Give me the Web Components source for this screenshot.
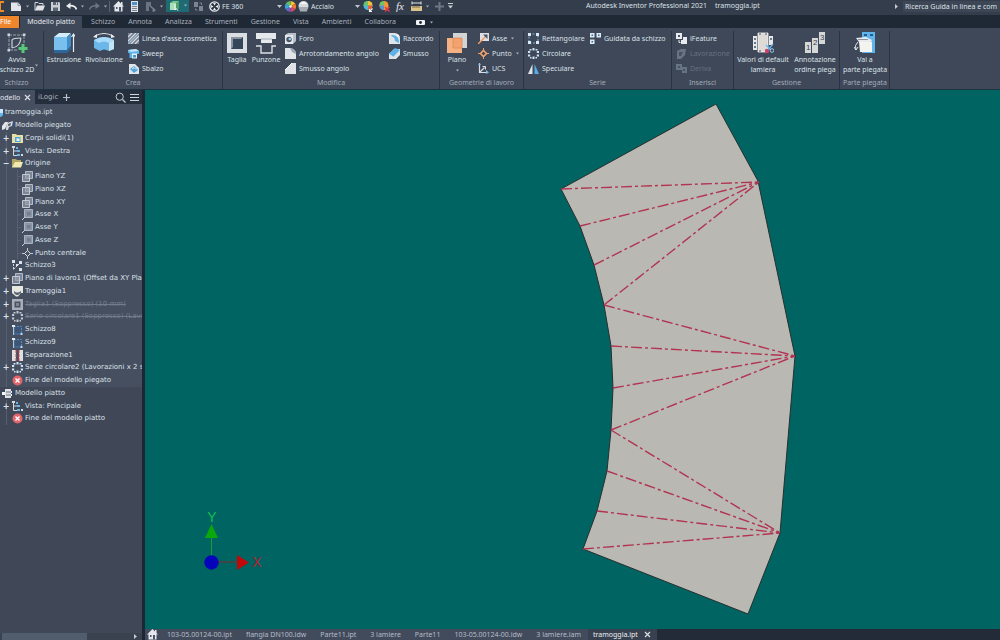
<!DOCTYPE html>
<html lang="it">
<head>
<meta charset="utf-8">
<meta name="viewport" content="width=device-width, initial-scale=1">
<title>Autodesk Inventor Professional 2021 - tramoggia.ipt</title>
<style>
  html, body { margin: 0; height: 100%; }
  body { background: #1f2835; font: 7px/9px "Noto Sans", "Open Sans", sans-serif; color: #dce1e8; }
</style>
</head>
<body>
<inventor-app></inventor-app>

<script>
/* Small glyphs are drawn on an 11-unit grid, large ones on a 22-unit grid. */
const RING = c => `<g fill="${c}"><path d="M4.500 0h2v2.500h-2zM4.500 8.500h2V11h-2zM0 3h2.200v2H0zM8.800 3H11v2H8.800zM0 6.500h2.200v2H0zM8.800 6.500H11v2H8.800z"/><path d="M1.500 1h2v1.500h-2zM7.500 1h2v1.500h-2zM2 9h1.500v1.500H2zM7.500 9H9v1.500H7.500z"/></g>`;
const SMALL = {
  logo: '<path d="M-5 1H4M-5 10H4M0 1v9" stroke="#f08a24" stroke-width="2" fill="none"/>',
  newdoc: '<path d="M0 1.500h7l3 3v5.500H0z" fill="#e2e5e9"/><path d="M7 1.500v3h3" fill="none" stroke="#8a92a0"/>',
  open: '<path d="M1 9.500V1.500h3l1 1h4v2" fill="none" stroke="#d4d8de"/><path d="M1 9.500l2-5h8l-2 5z" fill="#dfe2e7"/>',
  save: '<path d="M1 1h8l1 1v8H1z" fill="#c9ced6"/><path d="M3 1h5v3H3zM3 6.500h5V10H3z" fill="#5b6575"/><path d="M6 1.500h1v2H6z" fill="#e8eaee"/>',
  undo: '<path d="M10.500 8.500C9.500 5.500 7.500 4.500 4 4.700" fill="none" stroke="#eceff2" stroke-width="1.800"/><path d="M0 5l4.500-3.500v6.500z" fill="#eceff2"/>',
  redo: '<path d="M.5 8.500C1.500 5.500 3.500 4.500 7 4.700" fill="none" stroke="#6a7484" stroke-width="1.600"/><path d="M11 5L6.500 1.500v6.500z" fill="#6a7484"/>',
  home: '<path d="M5.500 0L11 5.500H9.500V10.500H1.500V5.500H0z" fill="#e4e7eb"/><path d="M3 6h1.500v2H3zM6 6h2v4.500H6z" fill="#4c5667"/><path d="M8 1h1.500v3H8z" fill="#e4e7eb"/>',
  doc: '<path d="M2 0h7v11H2z" fill="#dfe3e8"/><path d="M3 1h5v3H3z" fill="#4d94c9"/><path d="M3 5.500h5M3 7.500h5M3 9.500h5" stroke="#5f6a7a" stroke-width=".8"/>',
  select: '<path d="M1 1h5v4H4v5H1z" fill="#6b7484"/><path d="M5 5l5 4-2 .3 1 1.700" fill="none" stroke="#7d8695" stroke-width="1.300"/>',
  cubes: '<path d="M1 3l3-2h6v7l-3 2H1z" fill="#79c690"/><path d="M1 3h6v7H1z" fill="#a6dfb6"/><path d="M7 3l3-2v7l-3 2z" fill="#4f9f6b"/><path d="M6 4v6l1.500-1.300 1.500 2" fill="none" stroke="#f4f6f8"/>',
  swap: '<path d="M1 1h4v5H1zM6 5h4v5H6z" fill="#7b8493"/><path d="M6.500 2h2v2M4.500 9h-2V7.500" fill="none" stroke="#7b8493"/>',
  wheel: '<circle cx="5.500" cy="5.500" r="4.700" fill="#2b3442" stroke="#e8eaee" stroke-width="1.300"/><g fill="#eceef1"><path d="M4 2h3L5.500 4.500zM4 9h3L5.500 6.500zM2 4v3l2.500-1.500zM9 4v3L6.500 5.500z"/></g>',
  color: '<g stroke="none"><path d="M5.500 5.500V0a5.500 5.500 0 0 1 4.800 2.800z" fill="#f5c22f"/><path d="M5.500 5.500l4.800-2.700a5.500 5.500 0 0 1 0 5.400z" fill="#ef7b32"/><path d="M5.500 5.500l4.800 2.700A5.500 5.500 0 0 1 5.500 11z" fill="#d8476b"/><path d="M5.500 5.500V11A5.500 5.500 0 0 1 .7 8.200z" fill="#6c62c7"/><path d="M5.500 5.500L.7 8.200a5.500 5.500 0 0 1 0-5.400z" fill="#35a8da"/><path d="M5.500 5.500L.7 2.800A5.500 5.500 0 0 1 5.500 0z" fill="#5fc264"/></g><circle cx="5.500" cy="5.500" r="1.300" fill="#f3efe6"/>',
  colorpick: '<circle cx="5" cy="4.500" r="4.500" fill="#4fb6dd"/><path d="M5 4.500V0a4.500 4.500 0 0 1 4.500 4.500z" fill="#f5c22f"/><path d="M5 4.500h4.500A4.500 4.500 0 0 1 5 9z" fill="#e8603c"/><path d="M5 4.500H.5A4.500 4.500 0 0 1 5 0z" fill="#69c565"/><path d="M6.500 10.500l3-3M6.500 8v2.500H9" stroke="#f1f3f5" stroke-width="1.200" fill="none"/>',
  colorclear: '<circle cx="5" cy="4.500" r="4.500" fill="#ef9a38"/><path d="M5 4.500V0a4.500 4.500 0 0 0-4.500 4.500z" fill="#69c565"/><path d="M5 4.500H.5A4.500 4.500 0 0 0 5 9z" fill="#5a8fd8"/><path d="M6 6l4.500 4.500M10.500 6L6 10.500" stroke="#e0394b" stroke-width="1.500"/>',
  steel: '<circle cx="5.500" cy="5" r="5" fill="#d7dade"/><path d="M1 6h9l-1 4.500H2z" fill="#a5abb4"/><path d="M2 3a4 4 0 0 1 7 0z" fill="#f5f6f7"/>',
  measure: '<path d="M1 2h9M1 .5v3M10 .5v3" stroke="#e4e7eb"/><path d="M0 5h11v5H0z" fill="#dcc488"/><path d="M2 5v2M4 5v2M6 5v2M8 5v2" stroke="#4b4332" stroke-width=".7"/>',
  plusdim: '<path d="M5.500 1v9M1 5.500h9" stroke="#6d7787" stroke-width="2"/>',
  menu: '<path d="M0 2.500h5" stroke="#c9ced6"/><path d="M0 4.500h5L2.500 7.500z" fill="#c9ced6"/>',
  caret: '<path d="M0 4h5L2.500 7z" fill="#c2c8d1"/>',
  dot: '<path d="M1 4.500h3L2.500 6.500z" fill="#aab1bd"/>',
  right: '<path d="M1 3l3 2.500L1 8z" fill="#c2c8d1"/>',
  camera: '<rect x="1" y="3" width="9" height="5" rx="1" fill="#f2f4f6"/><circle cx="5.500" cy="5.500" r="1.400" fill="#1f2835"/>',
  axisline: '<path d="M0 0h11v11H0z" fill="#75808f"/><path d="M0 4l4-4M0 8l8-8M0 11L11 0M3 11l8-8M7 11l4-4" stroke="#dbe0e6" stroke-width="1.100"/><path d="M0 11L11 0" stroke="#7cc0ea" stroke-width=".8"/>',
  sweep: '<path d="M0 2l8-1 3 2v3H6v4H1.500V5H0z" fill="#5fb2e6"/><path d="M0 2l8-1 3 2-8 1z" fill="#c3e4f7"/><path d="M4 5.500h5v5H4z" fill="#dff0fa"/><path d="M5 7h3v2.500H5z" fill="#4d94c9"/>',
  emboss: '<path d="M1 1h6l4 4v6H1z" fill="#e1e5ea"/><path d="M2 6l4-3 4 4-4 3z" fill="#4fa3dc"/><path d="M4 6l2-1.500 2 2" fill="none" stroke="#e7f4fc"/>',
  hole: '<path d="M0 2h8v9H0z" fill="#e4e7eb"/><path d="M0 2l3-2h8v8l-3 3V2z" fill="#b9c0c9"/><circle cx="4" cy="6.500" r="2.700" fill="#4a5465"/><circle cx="4.800" cy="6" r="1.300" fill="#9ed1ef"/>',
  roundcorner: '<path d="M0 0h5q6 1 6 6v5H0z" fill="#e0e4e8"/><path d="M5 0q6 1 6 6L7 4z" fill="#9aa4b2"/>',
  chamfercorner: '<path d="M0 11V7l7-7h4v11z" fill="#dfe3e7"/><path d="M0 7l7-7" stroke="#fafbfb"/>',
  fillet: '<path d="M0 0h6l5 5v6H0z" fill="#dfe3e7"/><path d="M3 2q7 0 7 8l-4-2Q6 4 2 3z" fill="#5cb1e6"/><path d="M6 0q5 1 5 5L8 3z" fill="#f7f8f9"/>',
  chamfer: '<path d="M0 6l5-5h6v6l-4 4H0z" fill="#dfe3e7"/><path d="M0 6l6-6 5 2-7 7z" fill="#5cb1e6"/><path d="M0 6l4 3" stroke="#c6e6f8"/>',
  axis: '<path d="M2 0h9v8H2z" fill="#dde1e6"/><path d="M0 11L8 3" stroke="#f09b62" stroke-width="1.500"/><path d="M5 1.500h4.500V6z" fill="#4a5465"/>',
  point: '<path d="M5.500 0v11M0 5.500h11" stroke="#e99b68"/><path d="M5.500 2.500l3 3-3 3-3-3z" fill="#3c4656" stroke="#f4a36c" stroke-width="1.600"/>',
  ucs: '<path d="M1.500 0v9.500H10M1.500 9.500l5-5" fill="none" stroke="#d9dde3" stroke-width="1.200"/><path d="M8 7l3 2.500-3 1.500zM0 2l1.500-2L3 2z" fill="#7cc0ea"/><path d="M4.500 3.500h3v3" fill="none" stroke="#d9dde3"/>',
  rect: '<path d="M1 1h9v9H1z" fill="none" stroke="#7fb5dc" stroke-dasharray="2 1.500"/><path d="M0 0h3v3H0zM8 0h3v3H8zM0 8h3v3H0zM8 8h3v3H8z" fill="#dceaf5"/>',
  circ: RING('#cfe6f6'),
  mirror: '<path d="M4.500 1v10H0z" fill="#dfe4ea"/><path d="M6.500 1v10H11z" fill="#54aee8"/>',
  sketchdriven: '<path d="M0 0h4.500v4.500H0zM6.500 0H11v4.500H6.500zM0 6.500h4.500V11H0z" fill="#dceaf5"/><path d="M1.500 1.500H3V3H1.500zM8 1.500h1.500V3H8zM1.500 8H3v1.500H1.500z" fill="#2f6f9f"/>',
  ifeature: '<path d="M0 0h6v6H0z" fill="#e9ecef"/><path d="M5 10V7h2V4h4v7H5z" fill="#e9ecef"/><path d="M2 2h2v2H2z" fill="#4a5465"/><path d="M3 7v2.500h1.500" fill="none" stroke="#e9ecef"/>',
  machine: '<path d="M1 3l4-2h5l-1 6-4 4H1z" fill="#687383"/><path d="M3 4h4l-2 4H3z" fill="#475163"/>',
  derive: '<path d="M0 1h6v3h5v6H6V7H0z" fill="#687383"/><path d="M2 3h2v2H2zM7 6h2v2H7z" fill="#475163"/>',
  search: '<circle cx="4.700" cy="4.700" r="3.600" fill="none" stroke="#c3c9d2"/><path d="M7.500 7.500l3 3" stroke="#c3c9d2" stroke-width="1.200"/>',
  burger: '<path d="M1 2.500h9M1 5.500h9M1 8.500h9" stroke="#d0d5dd" stroke-width="1.200"/>',
  add: '<path d="M5.500 2v7M2 5.500h7" stroke="#b9c0cb" stroke-width="1.200"/>',
  close: '<path d="M3 3l5 5M8 3L3 8" stroke="#d8dce3" stroke-width="1.200"/>',
  part: '<path d="M0 2h9l2 1v5q-1 2-3 2H0z" fill="#63b6ea"/><path d="M8 2h3v4H8z" fill="#cde8f8"/>',
  folded: '<path d="M0 6l3-4h3L3 9l-3 1z" fill="#e4e7eb"/><path d="M4 8l1-5 6-2-1 5-3 1-1 3H4z" fill="#d3d7de"/><path d="M6 4l3-1-.5 2.500L6 6z" fill="#5a6474"/>',
  flat: '<path d="M3 1h6v9H3z" fill="#dfe3e8"/><path d="M0 4h3v3H0zM9 3h1v2H9zM9 6h1v2H9z" fill="#f4f5f7"/><path d="M4 4h5M4 7h5" stroke="#4a5465" stroke-width=".8"/>',
  solids: '<path d="M0 1h4l1 1h6v8H0z" fill="#e8dfa4"/><path d="M3 4h5.500v5H3z" fill="#4fa6dd"/><path d="M4.500 5.500h3V8h-3z" fill="#f2f4f0"/>',
  view: '<path d="M1.500 1v8.500H5M1.500 5H5" fill="none" stroke="#d3d9e0"/><path d="M4 1h2v2H4zM5 8h3v2H5zM5 4h3v2H5z" fill="#6ab5e8"/><path d="M9 8h2v2H9zM0 0h3v2H0z" fill="#d3d9e0"/>',
  folder: '<path d="M0 9.500V1h4l1 1h4v2" fill="#b3a564"/><path d="M0 9.500L3 4h8L9 9.500z" fill="#f1e8b0"/>',
  plane: '<path d="M3.500.5h7v7h-7z" fill="#7d8797" stroke="#b4bbc6"/><path d="M.5 3.500h7v7h-7z" fill="#949dab" fill-opacity=".7" stroke="#c3c9d2"/>',
  treeaxis: '<path d="M2.500.5h8v8h-8z" fill="#8a94a3" stroke="#aab2bd"/><path d="M0 11l3-3" stroke="#c9cfd7"/><path d="M5 3h3.500v3.500H5z" fill="#737d8d"/>',
  center: '<path d="M5.500 0v11M0 5.500h11" stroke="#c5cbd4"/><path d="M5.500 2.500l3 3-3 3-3-3z" fill="#4a5465" stroke="#d9dde3"/>',
  sketchused: '<path d="M1.500 1v9M1.500 9.500l7-7M7 9.500h3" fill="none" stroke="#cfd5dd" stroke-dasharray="2 1"/><path d="M0 0h3v3H0zM7 1h3v3H7zM7 8h3v3H7zM4 4h2v2H4z" fill="#dde2e8"/>',
  hopper: '<path d="M0 0h11v7H9L6 10.500H4L0 7z" fill="#e6e8df"/><path d="M2 5q3 3 7 0v2L6 9H4L2 7z" fill="#5a6474"/>',
  cut: '<path d="M0 0h11v11H0z" fill="#a8afba"/><path d="M2.500 2.500h6v6h-6z" fill="#4a5364"/><path d="M4 4h3v3H4z" fill="#7b8594"/>',
  circgrey: RING('#c3c9d2'),
  sketch: '<path d="M2 2.500h7.500V10H2z" fill="#3f5574" stroke="#4d8fd0" stroke-dasharray="2 1"/><path d="M0 1h3v2H0z" fill="#e9ecef"/><path d="M1.500 3v8" stroke="#d5dae1" stroke-width=".8"/><path d="M8.500 9h2v2h-2z" fill="#b8d9f1"/>',
  split: '<path d="M0 0h4v11H0zM7 0h4v11H7z" fill="#dedfdf"/><path d="M4 0v11M7 0v11" stroke="#d0455b" stroke-dasharray="3 1"/>',
  end: '<circle cx="5.500" cy="5.500" r="5" fill="#e0646a"/><path d="M3.500 3.500l4 4M7.500 3.500l-4 4" stroke="#fff" stroke-width="1.400"/>'
};
const LARGE = {
  sketch2d: '<path d="M3 3h15v9M3 3v15h9" fill="none" stroke="#98a1af" stroke-dasharray="3 1"/><path d="M6 16V8q1-2 9-2" fill="none" stroke="#cdd3da" stroke-width="1.200"/><path d="M6 16q8-1 9-10" fill="none" stroke="#cdd3da" stroke-width="1.200"/><path d="M1.500 1.500h2.500v2.500H1.500zM17 1.500h2.500v2.500H17zM1.500 17h2.500v2.500H1.500z" fill="#cfd4dc"/><path d="M17 12v9M12.500 16.500h9" stroke="#58c878" stroke-width="3"/>',
  extrude: '<path d="M1 5l5-4h12l-4 4z" fill="#d3ecfa"/><path d="M1 5h13v13H1z" fill="#79c0ee"/><path d="M14 5l4-4v13l-4 4z" fill="#3f8fcb"/><path d="M1 18h13l4-4v3l-4 4H1z" fill="#2d6699"/><path d="M20.500 20V3M18.500 5l2-3 2 3" fill="none" stroke="#e9ecef" stroke-width="1.200"/>',
  revolve: '<path d="M1 8Q11 2 21 8v9l-5 2q-5-3-9 0l-6-3z" fill="#6bb7ea"/><path d="M1 8Q11 2 21 8l-5 3q-5-3-10 0z" fill="#a9dafa"/><path d="M16 11l5-3v9l-5 2z" fill="#c5e4f6"/><path d="M2 4q9-5 18 0" fill="none" stroke="#e9ecef" stroke-width="1.200"/><path d="M0 5l4-3v4zM22 5l-4-3v4z" fill="#e9ecef"/>',
  cut: '<path d="M1 1h20v20H1z" fill="#dadde1"/><path d="M5 5h12v12H5z" fill="#35455a"/><path d="M5 5h12l-2 2H7v8l-2 2z" fill="#8993a1"/>',
  punch: '<path d="M1 1h20v6h-4v4H6V7H1z" fill="#e6e9ec"/><path d="M6 7h11" stroke="#a4acb7"/><path d="M1 14h5v7h11v-7h4" fill="none" stroke="#dce0e5" stroke-width="1.400"/>',
  plane: '<path d="M7 1h14v15H7z" fill="#d2d5d6"/><path d="M1 6h15v15H1z" fill="#f6b183"/><path d="M7 6h9v10H7z" fill="#f4a26d" stroke="#d98a57" stroke-width=".8"/>',
  defaults: '<path d="M1 4h4v14H1zM17 4h4v9h-4z" fill="#e6e8ea"/><path d="M6 1h10v19H6z" fill="#dedad6" stroke="#f4f4f4" stroke-width=".8"/><path d="M3 6v2M3 10v2M3 14v2M19 6v2" stroke="#475163" stroke-width="1.500"/><path d="M8 1v2M14 1v2M8 18v2" stroke="#475163"/><path d="M14 13l5 5M21 12l-5 6" stroke="#67b6e9" stroke-width="1.300"/><circle cx="15" cy="19" r="2.200" fill="#c9426b"/><circle cx="20" cy="18.500" r="1.800" fill="none" stroke="#8fcaf0"/>',
  vai: '<path d="M8 0h13v21H8z" fill="#5fb4ec"/><path d="M10 2h3v2h-3zM16 2h3v2h-3z" fill="#245d8d"/><path d="M2 6l10-1 6 3-1 2H5z" fill="#e9ecee"/><path d="M5 10h13v10H6z" fill="#f3f3f0"/><path d="M4 7.500h10" stroke="#8a94a2"/><path d="M4 10q-4 3-2 8M0 15l2 3 2-3" fill="none" stroke="#e9ecef"/>',
  order: '<path d="M1 10h6v11H1zM8 6h6v15H8zM15 0h6v12h-6z" fill="#d6d8d8"/><g font-family="Liberation Sans, sans-serif" font-size="8" fill="#38424f"><text x="2" y="18">1</text><text x="9" y="13">2</text><text x="16" y="8">3</text></g>'
};

/* Shared helper: registers an element whose shadow root is cloned from a template string. */
const base = 'button,input,select,a{font:inherit;color:inherit;background:none;border:0;margin:0;padding:0;text-decoration:none;white-space:nowrap}';
function element(name, html) {
  const tpl = document.createElement('template');
  customElements.define(name, class extends HTMLElement {
    connectedCallback() {
      if (this.shadowRoot) return;
      tpl.innerHTML = `<style>${base}</style>` + (typeof html === 'function' ? html(this) : html);
      this.attachShadow({ mode: 'open' }).append(tpl.content.cloneNode(true));
    }
  });
}

element('inv-icon', el => {
  const n = el.getAttribute('name');
  const large = el.hasAttribute('large');
  const narrow = ['dot', 'caret', 'menu', 'right'].includes(n);
  const w = large ? 22 : narrow ? 5 : 11, h = large ? 22 : 11;
  return `<style>:host{display:block;flex:none}svg{display:block;overflow:hidden}</style>
  <svg width="${w}" height="${h}" viewBox="0 0 ${w} ${h}" aria-hidden="true">${(large ? LARGE : SMALL)[n]}</svg>`;
});

element('tool-cell', el => `<style>
  :host{display:block;flex:none}
  button{display:flex;align-items:center;justify-content:center;width:${el.hasAttribute('menu') ? 7 : 16}px;height:11px}
  </style><button aria-label="${el.getAttribute('label') || 'Altro'}"><inv-icon name="${el.getAttribute('icon') || 'dot'}"></inv-icon></button>`);

element('title-bar', `<style>
  :host{display:grid;grid-template-columns:583px 1fr auto;height:11px;padding-bottom:4px;background:#343d4b;overflow:hidden}
  .tools{display:flex;align-items:center}
  .logo{width:8px;overflow:hidden}
  .sep{width:1px;height:11px;background:#596373}
  .on{display:flex;background:#1f6b73;height:12px;width:23px;box-sizing:border-box;margin:0 1px}
  .pick{display:flex;align-items:center;height:11px}
  .pick select{appearance:none;width:55px;height:11px;line-height:11px}
  .pick.mat{gap:2px}
  .pick.mat select{width:42px}
  .fx{font:italic 11px/11px "Liberation Serif",serif;width:16px;text-align:center;color:#e8ebef}
  .name{display:flex;gap:8px;padding-left:3px;line-height:11px;white-space:nowrap}
  .help{display:flex;align-items:center;gap:4px;width:106px;overflow:hidden}
  .help input{width:97px;height:11px;padding-left:2px;box-sizing:border-box;background:#3d4655}
  .help input::placeholder{color:#dce1e8;opacity:1}
  </style>
  <div class="tools">
    <div class="logo"><inv-icon name="logo"></inv-icon></div>
    <tool-cell icon="newdoc" label="Nuovo"></tool-cell><tool-cell menu></tool-cell>
    <tool-cell icon="open" label="Apri"></tool-cell><tool-cell icon="save" label="Salva"></tool-cell>
    <tool-cell icon="undo" label="Annulla"></tool-cell><tool-cell menu></tool-cell>
    <tool-cell icon="redo" label="Ripeti"></tool-cell><tool-cell menu></tool-cell>
    <div class="sep"></div>
    <tool-cell icon="home" label="Pagina iniziale"></tool-cell><tool-cell icon="doc" label="Documento"></tool-cell>
    <tool-cell icon="select" label="Seleziona"></tool-cell><tool-cell menu></tool-cell>
    <div class="on"><tool-cell icon="cubes" label="Visualizza"></tool-cell><tool-cell menu></tool-cell></div>
    <tool-cell icon="swap" label="Scambia"></tool-cell><tool-cell icon="wheel" label="Materiale"></tool-cell>
    <div class="pick"><select aria-label="Materiale"><option>FE 360</option></select><inv-icon name="caret"></inv-icon></div>
    <tool-cell icon="color" label="Aspetto"></tool-cell>
    <div class="pick mat"><inv-icon name="steel"></inv-icon><select aria-label="Aspetto"><option>Acciaio</option></select><inv-icon name="caret"></inv-icon></div>
    <tool-cell icon="colorpick" label="Regola"></tool-cell><tool-cell icon="colorclear" label="Cancella"></tool-cell>
    <button class="fx">fx</button>
    <tool-cell icon="measure" label="Misura"></tool-cell><tool-cell menu></tool-cell>
    <tool-cell icon="plusdim" label="Aggiungi"></tool-cell><tool-cell menu icon="menu"></tool-cell>
  </div>
  <div class="name"><span>Autodesk Inventor Professional 2021</span><span>tramoggia.ipt</span></div>
  <div class="help"><inv-icon name="right"></inv-icon><input type="text" aria-label="Guida" placeholder="Ricerca Guida in linea e com"></div>`);

element('ribbon-tabs', `<style>
  :host{display:block;background:#1f2835;padding-top:1px}
  nav{display:flex;align-items:center;height:12px;line-height:12px;color:#a9b1bd}
  a{padding:0 6px 0 7px;height:12px}
  .file{background:#f0862c;color:#fff;padding:0 8px 0 0}
  .on{background:#3e4858;color:#e6e9ee;margin-left:1px;margin-right:2px;padding-right:7px}
  .extra{display:flex;align-items:center;gap:3px;padding-left:13px}
  </style>
  <nav><a class="file" href="#">File</a><a class="on" href="#">Modello piatto</a><a href="#">Schizzo</a><a href="#">Annota</a><a href="#">Analizza</a><a href="#">Strumenti</a><a href="#">Gestione</a><a href="#">Vista</a><a href="#">Ambienti</a><a href="#">Collabora</a>
  <button class="extra" aria-label="Opzioni"><inv-icon name="camera"></inv-icon><inv-icon name="dot"></inv-icon></button></nav>`);

element('ribbon-panel', el => `<style>
  :host{display:grid;grid-template-rows:45px 12px;row-gap:1px;flex:none;width:${el.getAttribute('width')}px;box-sizing:border-box;border-right:1px solid #2b3442}
  .body{display:flex;align-items:flex-start}
  h2{margin:0;font:inherit;line-height:12px;text-align:center;color:#a3abb8;white-space:nowrap}
  :host([narrow-title]) h2{margin-right:10px}
  </style><div class="body"><slot></slot></div><h2>${el.getAttribute('title-text')}</h2>`);

element('big-tool', el => `<style>
  :host{display:block;flex:none;width:${el.getAttribute('width')}px}
  button{display:flex;flex-direction:column;align-items:center;width:100%;padding-top:1px}
  span{margin-top:1px;white-space:nowrap;text-align:center;line-height:10px}
  </style><button><inv-icon large name="${el.getAttribute('icon')}"></inv-icon><span><slot></slot></span></button>`);

element('tool-column', el => `<style>
  :host{display:grid;grid-auto-rows:15px;flex:none;padding-left:4px;box-sizing:border-box;${el.hasAttribute('width') ? `width:${el.getAttribute('width')}px` : ''}}
  </style><slot></slot>`);

element('small-tool', el => `<style>
  :host{display:block}
  button{display:flex;align-items:center;gap:3px;height:15px}
  :host([disabled]) button{color:#667080}
  </style><button ${el.hasAttribute('disabled') ? 'disabled' : ''}><inv-icon name="${el.getAttribute('icon')}"></inv-icon><slot></slot>${el.hasAttribute('menu') ? '<inv-icon name="dot"></inv-icon>' : ''}</button>`);

element('tool-ribbon', `<style>
  :host{display:flex;background:#3e4858;height:58px;padding-top:3px;border-bottom:1px solid #1c3440;overflow:hidden}
  .drop{display:flex;align-items:flex-end;height:40px}
  </style>
  <ribbon-panel width="44" narrow-title title-text="Schizzo"><big-tool icon="sketch2d" width="34">Avvia<br>schizzo 2D</big-tool><div class="drop"><inv-icon name="dot"></inv-icon></div></ribbon-panel>
  <ribbon-panel width="179" title-text="Crea"><big-tool icon="extrude" width="40">Estrusione</big-tool><big-tool icon="revolve" width="40">Rivoluzione</big-tool>
    <tool-column><small-tool icon="axisline">Linea d'asse cosmetica</small-tool><small-tool icon="sweep">Sweep</small-tool><small-tool icon="emboss">Sbalzo</small-tool></tool-column></ribbon-panel>
  <ribbon-panel width="217" title-text="Modifica"><big-tool icon="cut" width="28">Taglia</big-tool><big-tool icon="punch" width="30">Punzone</big-tool>
    <tool-column width="104"><small-tool icon="hole">Foro</small-tool><small-tool icon="roundcorner">Arrotondamento angolo</small-tool><small-tool icon="chamfercorner">Smusso angolo</small-tool></tool-column>
    <tool-column><small-tool icon="fillet">Raccordo</small-tool><small-tool icon="chamfer">Smusso</small-tool></tool-column></ribbon-panel>
  <ribbon-panel width="84" title-text="Geometrie di lavoro"><big-tool icon="plane" width="34">Piano<br><inv-icon name="dot" style="width:5px;margin:auto"></inv-icon></big-tool>
    <tool-column><small-tool icon="axis" menu>Asse</small-tool><small-tool icon="point" menu>Punto</small-tool><small-tool icon="ucs">UCS</small-tool></tool-column></ribbon-panel>
  <ribbon-panel width="148" title-text="Serie"><tool-column width="62"><small-tool icon="rect">Rettangolare</small-tool><small-tool icon="circ">Circolare</small-tool><small-tool icon="mirror">Speculare</small-tool></tool-column>
    <tool-column><small-tool icon="sketchdriven">Guidata da schizzo</small-tool></tool-column></ribbon-panel>
  <ribbon-panel width="62" title-text="Inserisci"><tool-column><small-tool icon="ifeature">iFeature</small-tool><small-tool icon="machine" disabled>Lavorazione</small-tool><small-tool icon="derive" disabled>Deriva</small-tool></tool-column></ribbon-panel>
  <ribbon-panel width="106" title-text="Gestione"><big-tool icon="defaults" width="58">Valori di default<br>lamiera</big-tool><big-tool icon="order" width="46">Annotazione<br>ordine piega</big-tool></ribbon-panel>
  <ribbon-panel width="50" title-text="Parte piegata"><big-tool icon="vai" width="50">Vai a<br>parte piegata</big-tool></ribbon-panel>`);

/* Browser tree rows: level, icon, label, expander, flags. */
const TREE = [
  [0, 'part', 'tramoggia.ipt'], [1, 'folded', 'Modello piegato'],
  [2, 'solids', 'Corpi solidi(1)', '+'], [2, 'view', 'Vista: Destra', '+'], [2, 'folder', 'Origine', '−'],
  [3, 'plane', 'Piano YZ'], [3, 'plane', 'Piano XZ'], [3, 'plane', 'Piano XY'],
  [3, 'treeaxis', 'Asse X'], [3, 'treeaxis', 'Asse Y'], [3, 'treeaxis', 'Asse Z'], [3, 'center', 'Punto centrale'],
  [2, 'sketchused', 'Schizzo3'], [2, 'plane', 'Piano di lavoro1 (Offset da XY Pla', '+'], [2, 'hopper', 'Tramoggia1', '+'],
  [2, 'cut', 'Taglia1 (Soppresso) (10 mm)', '+', 'off'], [2, 'circgrey', 'Serie circolare1 (Soppresso) (Lavo', '+', 'off'],
  [2, 'sketch', 'Schizzo8'], [2, 'sketch', 'Schizzo9'], [2, 'split', 'Separazione1'],
  [2, 'circ', 'Serie circolare2 (Lavorazioni x 2 su', '+'], [2, 'end', 'Fine del modello piegato'],
  [1, 'flat', 'Modello piatto', '', 'low'], [2, 'view', 'Vista: Principale', '+', 'low'], [2, 'end', 'Fine del modello piatto', '', 'low']
];
element('model-browser', () => `<style>
  :host{display:grid;grid-template-columns:minmax(0,1fr);grid-template-rows:14px 1fr 7px;background:#404858;border-right:3px solid #1b2735;min-width:0;overflow:hidden;box-sizing:border-box;font-family:"DejaVu Sans",sans-serif}
  .tabs{display:flex;align-items:center;background:#252e3c;color:#aab2bf}
  .tabs>*{display:flex;align-items:center;height:14px}
  .on{background:#464f60;color:#e0e4ea;width:35px;gap:2px;margin-right:3px;font-family:"Noto Sans",sans-serif}
  .end{margin-left:auto;gap:3px;padding-right:2px}
  ul{list-style:none;margin:0;padding:0}
  ul::before{content:"";display:block;height:2px;background:#464f60}
  li{display:flex;align-items:center;gap:2px;height:13px;white-space:nowrap;background:#464f60;overflow:hidden}
  li:nth-child(4n){height:12px}
  .l0 inv-icon{margin-left:-8px}
  .l1{padding-left:2px}
  .l3{padding-left:22px}
  .x{width:12px;margin-right:-2px;text-align:center;font-weight:bold;font-size:8px;flex:none;color:#dfe3e9}
  .l2{background-image:linear-gradient(#566071,#566071);background-size:1px 100%;background-position:6px 0;background-repeat:no-repeat}
  .l3{background-image:linear-gradient(#566071,#566071),linear-gradient(#566071,#566071),linear-gradient(#566071,#566071);background-size:1px 100%,1px 100%,4px 1px;background-position:6px 0,17px 0,17px 6px;background-repeat:no-repeat}
  .low{background-color:#404858}
  .off span:last-child{text-decoration:line-through;color:#727c8b}
  .scroll{display:flex;align-items:center;background:#3a4250}
  .thumb{width:60%;height:7px;background:#515d6d;margin-left:2px}
  .scroll inv-icon{margin-left:auto;margin-right:4px}
  </style>
  <div class="tabs"><button class="on">odello <inv-icon name="close"></inv-icon></button><button>iLogic</button><button aria-label="Aggiungi"><inv-icon name="add" style="margin-left:3px"></inv-icon></button>
    <div class="end"><button aria-label="Cerca"><inv-icon name="search"></inv-icon></button><button aria-label="Menu"><inv-icon name="burger"></inv-icon></button></div></div>
  <ul>${TREE.map(([l, i, t, x, c]) => `<li class="l${l} ${c || ''}">${l === 2 ? `<span class="x">${x || ''}</span>` : ''}<inv-icon name="${i}"></inv-icon><span>${t}</span></li>`).join('')}</ul>
  <div class="scroll"><div class="thumb"></div><inv-icon name="right"></inv-icon></div>`);

/* Flat pattern: outline, bend centrelines fanning from the three outer corners, and axis triad. */
const FANS = [
  [[759, 182], [[561, 189], [580, 226], [594, 265], [604, 305]]],
  [[795, 356], [[604, 305], [611, 346], [613, 388], [611, 430]]],
  [[780, 533], [[611, 430], [607, 471], [597, 511], [583, 549]]]
];
element('part-view', () => `<style>
  :host{display:block;background:#006463;min-height:0;overflow:hidden}
  svg{display:block;width:100%;height:100%}
  text{font:14px "Liberation Sans",sans-serif;text-anchor:middle}
  </style>
  <svg viewBox="145 90 855 539" preserveAspectRatio="xMinYMin meet" role="img" aria-label="Modello piatto tramoggia">
    <path d="M716 104L758 181L795 356L780 533L748 614L583 549L597 511L607 471L611 430L613 388L611 346L604 305L594 265L580 226L561 189Z" fill="#b9b8b3" stroke="#27302e"/>
    <g stroke="#b23452" stroke-width="1.400" stroke-dasharray="11 3 3 3">${FANS.map(([p, q]) => q.map(r => `<path d="M${r}L${p}"/>`).join('')).join('')}</g>
    <path d="M211.500 556V536" stroke="#1e9a3c"/><path d="M211.500 524l6.500 14h-13z" fill="#0ba80b"/>
    <path d="M218 562h20" stroke="#7c2a2a"/><path d="M237 555l12 7.500-12 7.500z" fill="#c00808"/>
    <circle cx="211.500" cy="562.500" r="7.200" fill="#0404bb"/>
    <text x="212" y="522" fill="#18bd4e">Y</text><text x="257" y="567" fill="#b5202b">X</text>
  </svg>`);

element('document-tabs', `<style>
  :host{display:block;background:#222b37;overflow:hidden}
  nav{display:inline-flex;align-items:center;height:11px;background:#414b5c;color:#b5bcc8;line-height:11px;padding-left:2px}
  a{padding:0 7px;height:11px}
  .home{padding:0 2px 0 0}
  .on{background:#38414f;color:#eef0f3;display:flex;gap:4px;padding:0 4px 0 5px}
  </style>
  <nav><a class="home" href="#" aria-label="Pagina iniziale"><inv-icon name="home"></inv-icon></a><a href="#">103-05.00124-00.ipt</a><a href="#">flangia DN100.idw</a><a href="#">Parte11.ipt</a><a href="#">3 lamiere</a><a href="#">Parte11</a><a href="#">103-05.00124-00.idw</a><a href="#">3 lamiere.iam</a><a class="on" href="#">tramoggia.ipt <inv-icon name="close"></inv-icon></a></nav>`);

element('inventor-app', `<style>
  :host{display:grid;grid-template-rows:auto auto auto minmax(0,1fr);height:100vh;overflow:hidden}
  main{display:grid;grid-template-columns:145px minmax(0,1fr);min-height:0}
  .work{display:grid;grid-template-rows:minmax(0,1fr) 11px;min-height:0}
  </style>
  <title-bar></title-bar><ribbon-tabs></ribbon-tabs><tool-ribbon></tool-ribbon>
  <main><model-browser></model-browser><div class="work"><part-view></part-view><document-tabs></document-tabs></div></main>`);
</script>
</body>
</html>
